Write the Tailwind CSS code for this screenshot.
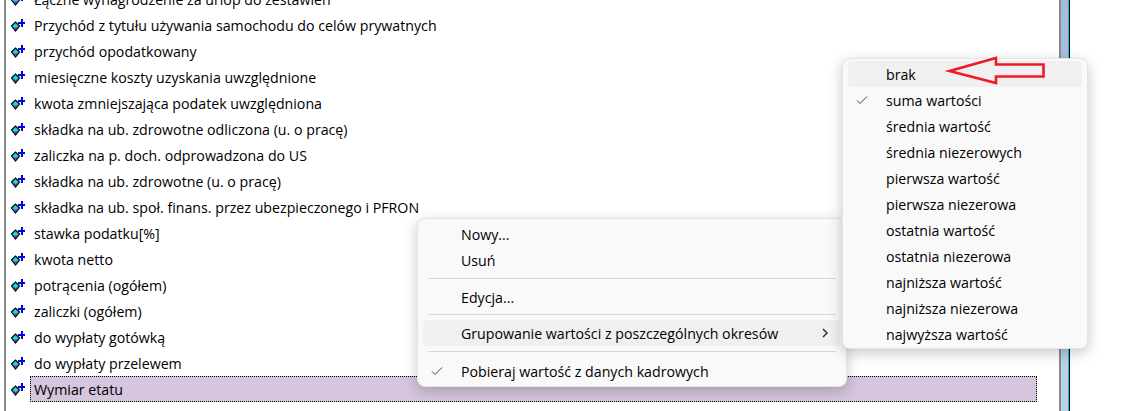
<!DOCTYPE html>
<html lang="pl">
<head>
  <meta charset="UTF-8" />
  <title>Składniki</title>
  <script src="https://cdn.jsdelivr.net/npm/@tailwindcss/browser@4"></script>
</head>
<body class="bg-white overflow-hidden font-['Open_Sans',sans-serif] text-[14.2px] text-black">
  <div class="relative w-[1129px] h-[411px] overflow-hidden">
    <div class="flex h-full pl-1">
      <!-- lista skladnikow -->
      <div class="w-[1057px] h-full border-l-2 border-r-2 border-[#8a8a8a] overflow-hidden">
        <ul id="rows" class="-mt-[14px] pl-[5px]">
          <li class="flex items-center h-[26px]"><svg class="w-[15px] h-[16px] shrink-0" viewBox="0 0 15 16"><path d="M.5 9 4.5 5 8.5 9 4.5 14Z" fill="#00e0e0" stroke="#000" stroke-width="1.2"/><path d="M1.5 9.5 4.5 13 7.5 9.5 4.5 11Z" fill="#b000a0"/><path d="M7 5h7v2H7zM10 2h2v8h-2z" fill="#0000e0" shape-rendering="crispEdges"/></svg><span class="ml-2 pt-[2px]">Łączne wynagrodzenie za urlop do zestawień</span></li>
          <li class="flex items-center h-[26px]"><svg class="w-[15px] h-[16px] shrink-0" viewBox="0 0 15 16"><path d="M.5 9 4.5 5 8.5 9 4.5 14Z" fill="#00e0e0" stroke="#000" stroke-width="1.2"/><path d="M1.5 9.5 4.5 13 7.5 9.5 4.5 11Z" fill="#b000a0"/><path d="M7 5h7v2H7zM10 2h2v8h-2z" fill="#0000e0" shape-rendering="crispEdges"/></svg><span class="ml-2 pt-[2px]">Przychód z tytułu używania samochodu do celów prywatnych</span></li>
          <li class="flex items-center h-[26px]"><svg class="w-[15px] h-[16px] shrink-0" viewBox="0 0 15 16"><path d="M.5 9 4.5 5 8.5 9 4.5 14Z" fill="#00e0e0" stroke="#000" stroke-width="1.2"/><path d="M1.5 9.5 4.5 13 7.5 9.5 4.5 11Z" fill="#b000a0"/><path d="M7 5h7v2H7zM10 2h2v8h-2z" fill="#0000e0" shape-rendering="crispEdges"/></svg><span class="ml-2 pt-[2px]">przychód opodatkowany</span></li>
          <li class="flex items-center h-[26px]"><svg class="w-[15px] h-[16px] shrink-0" viewBox="0 0 15 16"><path d="M.5 9 4.5 5 8.5 9 4.5 14Z" fill="#00e0e0" stroke="#000" stroke-width="1.2"/><path d="M1.5 9.5 4.5 13 7.5 9.5 4.5 11Z" fill="#b000a0"/><path d="M7 5h7v2H7zM10 2h2v8h-2z" fill="#0000e0" shape-rendering="crispEdges"/></svg><span class="ml-2 pt-[2px]">miesięczne koszty uzyskania uwzględnione</span></li>
          <li class="flex items-center h-[26px]"><svg class="w-[15px] h-[16px] shrink-0" viewBox="0 0 15 16"><path d="M.5 9 4.5 5 8.5 9 4.5 14Z" fill="#00e0e0" stroke="#000" stroke-width="1.2"/><path d="M1.5 9.5 4.5 13 7.5 9.5 4.5 11Z" fill="#b000a0"/><path d="M7 5h7v2H7zM10 2h2v8h-2z" fill="#0000e0" shape-rendering="crispEdges"/></svg><span class="ml-2 pt-[2px]">kwota zmniejszająca podatek uwzględniona</span></li>
          <li class="flex items-center h-[26px]"><svg class="w-[15px] h-[16px] shrink-0" viewBox="0 0 15 16"><path d="M.5 9 4.5 5 8.5 9 4.5 14Z" fill="#00e0e0" stroke="#000" stroke-width="1.2"/><path d="M1.5 9.5 4.5 13 7.5 9.5 4.5 11Z" fill="#b000a0"/><path d="M7 5h7v2H7zM10 2h2v8h-2z" fill="#0000e0" shape-rendering="crispEdges"/></svg><span class="ml-2 pt-[2px]">składka na ub. zdrowotne odliczona (u. o pracę)</span></li>
          <li class="flex items-center h-[26px]"><svg class="w-[15px] h-[16px] shrink-0" viewBox="0 0 15 16"><path d="M.5 9 4.5 5 8.5 9 4.5 14Z" fill="#00e0e0" stroke="#000" stroke-width="1.2"/><path d="M1.5 9.5 4.5 13 7.5 9.5 4.5 11Z" fill="#b000a0"/><path d="M7 5h7v2H7zM10 2h2v8h-2z" fill="#0000e0" shape-rendering="crispEdges"/></svg><span class="ml-2 pt-[2px]">zaliczka na p. doch. odprowadzona do US</span></li>
          <li class="flex items-center h-[26px]"><svg class="w-[15px] h-[16px] shrink-0" viewBox="0 0 15 16"><path d="M.5 9 4.5 5 8.5 9 4.5 14Z" fill="#00e0e0" stroke="#000" stroke-width="1.2"/><path d="M1.5 9.5 4.5 13 7.5 9.5 4.5 11Z" fill="#b000a0"/><path d="M7 5h7v2H7zM10 2h2v8h-2z" fill="#0000e0" shape-rendering="crispEdges"/></svg><span class="ml-2 pt-[2px]">składka na ub. zdrowotne (u. o pracę)</span></li>
          <li class="flex items-center h-[26px]"><svg class="w-[15px] h-[16px] shrink-0" viewBox="0 0 15 16"><path d="M.5 9 4.5 5 8.5 9 4.5 14Z" fill="#00e0e0" stroke="#000" stroke-width="1.2"/><path d="M1.5 9.5 4.5 13 7.5 9.5 4.5 11Z" fill="#b000a0"/><path d="M7 5h7v2H7zM10 2h2v8h-2z" fill="#0000e0" shape-rendering="crispEdges"/></svg><span class="ml-2 pt-[2px]">składka na ub. społ. finans. przez ubezpieczonego i PFRON</span></li>
          <li class="flex items-center h-[26px]"><svg class="w-[15px] h-[16px] shrink-0" viewBox="0 0 15 16"><path d="M.5 9 4.5 5 8.5 9 4.5 14Z" fill="#00e0e0" stroke="#000" stroke-width="1.2"/><path d="M1.5 9.5 4.5 13 7.5 9.5 4.5 11Z" fill="#b000a0"/><path d="M7 5h7v2H7zM10 2h2v8h-2z" fill="#0000e0" shape-rendering="crispEdges"/></svg><span class="ml-2 pt-[2px]">stawka podatku[%]</span></li>
          <li class="flex items-center h-[26px]"><svg class="w-[15px] h-[16px] shrink-0" viewBox="0 0 15 16"><path d="M.5 9 4.5 5 8.5 9 4.5 14Z" fill="#00e0e0" stroke="#000" stroke-width="1.2"/><path d="M1.5 9.5 4.5 13 7.5 9.5 4.5 11Z" fill="#b000a0"/><path d="M7 5h7v2H7zM10 2h2v8h-2z" fill="#0000e0" shape-rendering="crispEdges"/></svg><span class="ml-2 pt-[2px]">kwota netto</span></li>
          <li class="flex items-center h-[26px]"><svg class="w-[15px] h-[16px] shrink-0" viewBox="0 0 15 16"><path d="M.5 9 4.5 5 8.5 9 4.5 14Z" fill="#00e0e0" stroke="#000" stroke-width="1.2"/><path d="M1.5 9.5 4.5 13 7.5 9.5 4.5 11Z" fill="#b000a0"/><path d="M7 5h7v2H7zM10 2h2v8h-2z" fill="#0000e0" shape-rendering="crispEdges"/></svg><span class="ml-2 pt-[2px]">potrącenia (ogółem)</span></li>
          <li class="flex items-center h-[26px]"><svg class="w-[15px] h-[16px] shrink-0" viewBox="0 0 15 16"><path d="M.5 9 4.5 5 8.5 9 4.5 14Z" fill="#00e0e0" stroke="#000" stroke-width="1.2"/><path d="M1.5 9.5 4.5 13 7.5 9.5 4.5 11Z" fill="#b000a0"/><path d="M7 5h7v2H7zM10 2h2v8h-2z" fill="#0000e0" shape-rendering="crispEdges"/></svg><span class="ml-2 pt-[2px]">zaliczki (ogółem)</span></li>
          <li class="flex items-center h-[26px]"><svg class="w-[15px] h-[16px] shrink-0" viewBox="0 0 15 16"><path d="M.5 9 4.5 5 8.5 9 4.5 14Z" fill="#00e0e0" stroke="#000" stroke-width="1.2"/><path d="M1.5 9.5 4.5 13 7.5 9.5 4.5 11Z" fill="#b000a0"/><path d="M7 5h7v2H7zM10 2h2v8h-2z" fill="#0000e0" shape-rendering="crispEdges"/></svg><span class="ml-2 pt-[2px]">do wypłaty gotówką</span></li>
          <li class="flex items-center h-[26px]"><svg class="w-[15px] h-[16px] shrink-0" viewBox="0 0 15 16"><path d="M.5 9 4.5 5 8.5 9 4.5 14Z" fill="#00e0e0" stroke="#000" stroke-width="1.2"/><path d="M1.5 9.5 4.5 13 7.5 9.5 4.5 11Z" fill="#b000a0"/><path d="M7 5h7v2H7zM10 2h2v8h-2z" fill="#0000e0" shape-rendering="crispEdges"/></svg><span class="ml-2 pt-[2px]">do wypłaty przelewem</span></li>
          <li class="flex items-center h-[26px]"><svg class="w-[15px] h-[16px] shrink-0" viewBox="0 0 15 16"><path d="M.5 9 4.5 5 8.5 9 4.5 14Z" fill="#00e0e0" stroke="#000" stroke-width="1.2"/><path d="M1.5 9.5 4.5 13 7.5 9.5 4.5 11Z" fill="#b000a0"/><path d="M7 5h7v2H7zM10 2h2v8h-2z" fill="#0000e0" shape-rendering="crispEdges"/></svg><span class="ml-[4px] w-[1007px] h-[26px] flex items-center pl-[3px] pt-[2px] bg-[#d5c5dd] border border-dotted border-black">Wymiar etatu</span></li>
        </ul>
      </div>
      <!-- pasek po prawej -->
      <div class="w-[7px] h-full bg-gradient-to-b from-[#a4bcd8] to-[#bcd2ea]"></div>
      <div class="w-px h-full bg-[#00c8f0]"></div>
      <div class="w-px h-full bg-black"></div>
    </div>

    <!-- menu kontekstowe -->
    <div class="absolute left-[417px] top-[218px] w-[430px] h-[169px] bg-[#f9f9f9] border border-[#e4e4e4] rounded-lg shadow-[0_4px_14px_rgba(0,0,0,0.22)] px-[5px] pt-[2px]">
      <div class="h-[26px] flex items-center pl-[38px] pt-[2px]">Nowy...</div>
      <div class="h-[26px] flex items-center pl-[38px] pt-[2px]">Usuń</div>
      <div class="h-px bg-[#d9d9d9] mx-[5px] mt-[5px] mb-[5px]"></div>
      <div class="h-[26px] flex items-center pl-[38px] pt-[2px]">Edycja...</div>
      <div class="h-px bg-[#d9d9d9] mx-[5px] mt-[4px] mb-[5px]"></div>
      <div class="h-[26px] flex items-center pl-[38px] pt-[2px] bg-[#f0f0f0] rounded-[4px] w-[417px] relative">Grupowanie wartości z poszczególnych okresów
        <svg class="absolute left-[398px] top-[8px] w-[8px] h-[10px]" viewBox="0 0 8 10"><path d="M2 1 6 5 2 9" fill="none" stroke="#333" stroke-width="1.5"/></svg>
      </div>
      <div class="h-px bg-[#d9d9d9] mx-[5px] mt-[5px] mb-[6px]"></div>
      <div class="h-[26px] flex items-center pl-[38px] pt-[2px] relative">
        <svg class="absolute left-[8px] top-[7px] w-[12px] h-[12px]" viewBox="0 0 12 12"><path d="M1 6.5 4 9.5 11 2.5" fill="none" stroke="#444" stroke-width="1"/></svg>
        Pobieraj wartość z danych kadrowych</div>
    </div>

    <!-- podmenu -->
    <div class="absolute left-[842px] top-[58px] w-[246px] h-[291px] bg-[#f9f9f9] border border-[#e4e4e4] rounded-lg shadow-[0_4px_14px_rgba(0,0,0,0.22)] px-[5px] pt-[2px]">
      <div class="h-[26px] flex items-center pl-[38px] pt-[2px] bg-[#f0f0f0] rounded-[4px]">brak</div>
      <div class="h-[26px] flex items-center pl-[38px] pt-[2px] relative">
        <svg class="absolute left-[8px] top-[7px] w-[12px] h-[12px]" viewBox="0 0 12 12"><path d="M1 6.5 4 9.5 11 2.5" fill="none" stroke="#444" stroke-width="1"/></svg>
        suma wartości</div>
      <div class="h-[26px] flex items-center pl-[38px] pt-[2px]">średnia wartość</div>
      <div class="h-[26px] flex items-center pl-[38px] pt-[2px]">średnia niezerowych</div>
      <div class="h-[26px] flex items-center pl-[38px] pt-[2px]">pierwsza wartość</div>
      <div class="h-[26px] flex items-center pl-[38px] pt-[2px]">pierwsza niezerowa</div>
      <div class="h-[26px] flex items-center pl-[38px] pt-[2px]">ostatnia wartość</div>
      <div class="h-[26px] flex items-center pl-[38px] pt-[2px]">ostatnia niezerowa</div>
      <div class="h-[26px] flex items-center pl-[38px] pt-[2px]">najniższa wartość</div>
      <div class="h-[26px] flex items-center pl-[38px] pt-[2px]">najniższa niezerowa</div>
      <div class="h-[26px] flex items-center pl-[38px] pt-[2px]">najwyższa wartość</div>
    </div>

    <!-- strzalka -->
    <svg class="absolute left-[940px] top-[50px] w-[115px] h-[40px]" viewBox="0 0 115 40"><path d="M9.5 21 56 8V14.5H103.5V26.5H56V33Z" fill="none" stroke="#ed1c24" stroke-width="2.6"/></svg>
  </div>
</body>
</html>
